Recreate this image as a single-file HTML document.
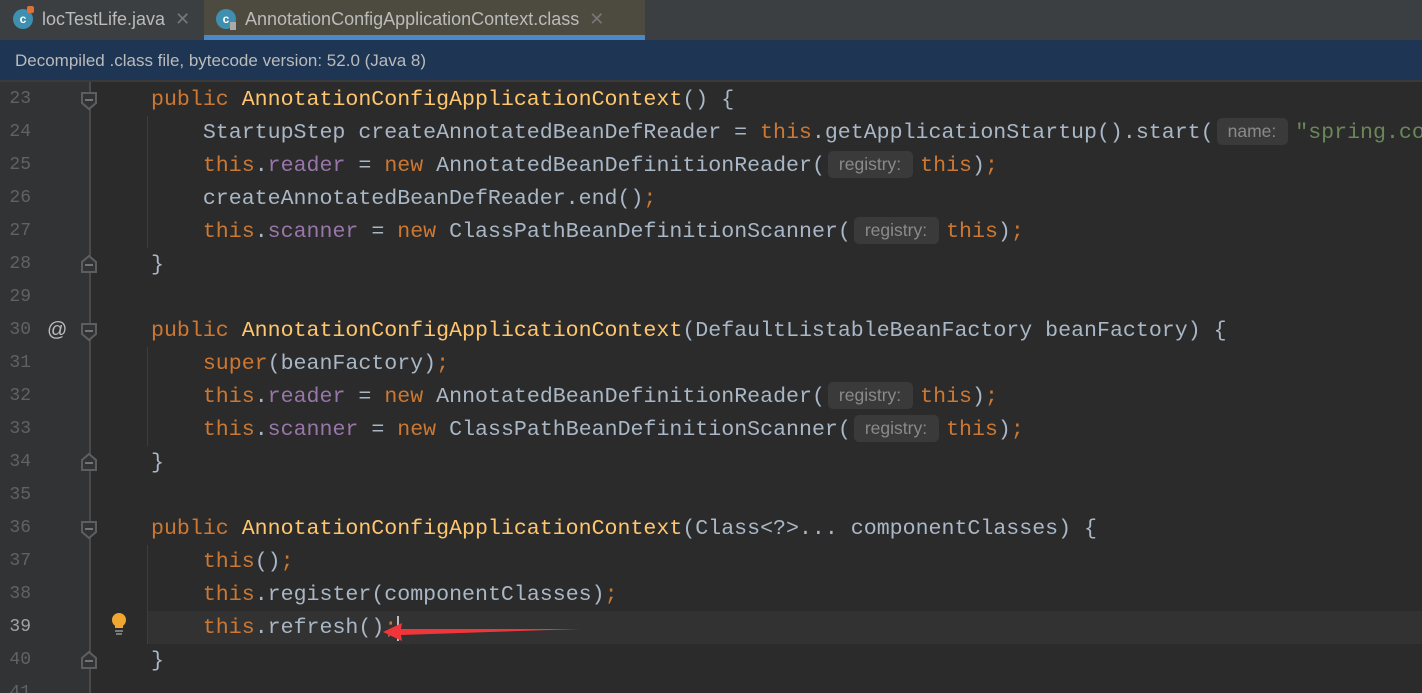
<!DOCTYPE html>
<html style="overflow:hidden;width:1422px;height:693px"><head><meta charset="utf-8"><style>
body{margin:0;width:1422px;height:693px;overflow:hidden;background:#2b2b2b;font-family:"Liberation Sans",sans-serif;position:relative}
.tabs{position:absolute;left:0;top:0;width:1422px;height:40px;background:#3c3f41}
.tab{position:absolute;top:0;height:35px;color:#bbbbbb;font-size:18px;line-height:38px}
.ic{position:absolute;top:9px;width:20px;height:20px;border-radius:50%;background:#3f8fb0;color:#fff;font-size:12px;line-height:20px;text-align:center;font-weight:bold}
.x{color:#777;margin-left:10px}
.banner{position:absolute;left:0;top:40px;width:1422px;height:40px;background:#1e3553;color:#bbbbbb;font-size:17px;line-height:41px;padding-left:15px;box-sizing:border-box}
.sep{position:absolute;left:0;top:80px;width:1422px;height:2px;background:#3a3a3a}
.gutter{position:absolute;left:0;top:82px;width:89px;height:611px;background:#313335}
.vline{position:absolute;left:89px;top:82px;width:2px;height:611px;background:#4a4a4a}
.ln{position:absolute;left:0;width:31px;text-align:right;color:#606366;font-family:"Liberation Mono",monospace;font-size:18px;line-height:33px}
.code{position:absolute;left:151px;right:0;overflow:hidden;white-space:pre;font-family:"Liberation Mono",monospace;font-size:21.6px;line-height:33px;color:#a9b7c6}
.k{color:#cc7832}.m{color:#ffc66d}.f{color:#9876aa}.s{color:#6a8759}
.h{display:inline-block;font-family:"Liberation Sans",sans-serif;font-size:17.5px;color:#8a8a8a;background:#3a3a3a;border-radius:5px;padding:0 12px 0 11px;line-height:27px;vertical-align:1px;margin:0 7px 0 3px}
.guide{position:absolute;left:147px;width:1px;background:#3d3d3d}
</style></head><body>
<div class="tabs">
 <div class="tab" style="left:0;width:204px;">
  <div class="ic" style="left:13px">c</div><div style="position:absolute;left:27px;top:6px;width:7px;height:7px;background:#e0703a;border-radius:2px"></div>
  <span style="position:absolute;left:42px;white-space:nowrap">locTestLife.java<span class="x">✕</span></span></div>
 <div class="tab" style="left:204px;width:441px;background:#4d4a3f;height:35px">
  <div class="ic" style="left:12px">c</div><div style="position:absolute;left:26px;top:22px;width:6px;height:8px;background:#aaa"></div>
  <span style="position:absolute;left:41px;white-space:nowrap">AnnotationConfigApplicationContext.class<span class="x">✕</span></span></div>
 <div style="position:absolute;left:204px;top:35px;width:441px;height:5px;background:#4a88c7"></div>
</div>
<div class="banner">Decompiled .class file, bytecode version: 52.0 (Java 8)</div>
<div class="sep"></div>
<div class="gutter"></div>
<div class="vline"></div>
<div style="position:absolute;left:147px;top:611px;width:1275px;height:33px;background:#323232"></div>
<div class="guide" style="top:116px;height:132px"></div>
<div class="guide" style="top:347px;height:99px"></div>
<div class="guide" style="top:545px;height:99px"></div>

<div class="ln" style="top:83px">23</div><div class="ln" style="top:116px">24</div><div class="ln" style="top:149px">25</div><div class="ln" style="top:182px">26</div><div class="ln" style="top:215px">27</div><div class="ln" style="top:248px">28</div><div class="ln" style="top:281px">29</div><div class="ln" style="top:314px">30</div><div class="ln" style="top:347px">31</div><div class="ln" style="top:380px">32</div><div class="ln" style="top:413px">33</div><div class="ln" style="top:446px">34</div><div class="ln" style="top:479px">35</div><div class="ln" style="top:512px">36</div><div class="ln" style="top:545px">37</div><div class="ln" style="top:578px">38</div><div class="ln" style="top:611px;color:#a4a3a3">39</div><div class="ln" style="top:644px">40</div><div class="ln" style="top:677px;height:16px;overflow:hidden">41</div>
<div style="position:absolute;left:47px;top:314px;color:#bbb;font-size:20px;line-height:33px">@</div>

<svg style="position:absolute;left:0;top:0" width="140" height="693">
 <g fill="#313335" stroke="#5e5e5e" stroke-width="2">
  <path d="M82 93h14v10l-7 6l-7-6z"/><path d="M82 324h14v10l-7 6l-7-6z"/><path d="M82 522h14v10l-7 6l-7-6z"/>
  <path d="M82 272h14v-10l-7-6l-7 6z"/><path d="M82 470h14v-10l-7-6l-7 6z"/><path d="M82 668h14v-10l-7-6l-7 6z"/>
 </g>
 <g stroke="#8a8a8a" stroke-width="1.5"><path d="M85 100h8M85 331h8M85 529h8M85 265h8M85 463h8M85 661h8"/></g>
 <circle cx="119" cy="620" r="7" fill="#f0a732"/><rect x="115" y="625" width="8" height="3" fill="#f0a732"/><path d="M115 631h8M116 634h6" stroke="#aaa" stroke-width="1.3"/>
</svg>

<div class="code" style="top:84px"><span class="k">public </span><span class="m">AnnotationConfigApplicationContext</span>() {</div>
<div class="code" style="top:117px">    StartupStep createAnnotatedBeanDefReader = <span class="k">this</span>.getApplicationStartup().start(<span class="h">name:</span><span class="s">"spring.context.annotated-bean-reader.create"</span>);</div>
<div class="code" style="top:150px">    <span class="k">this</span>.<span class="f">reader</span> = <span class="k">new </span>AnnotatedBeanDefinitionReader(<span class="h">registry:</span><span class="k">this</span>)<span class="k">;</span></div>
<div class="code" style="top:183px">    createAnnotatedBeanDefReader.end()<span class="k">;</span></div>
<div class="code" style="top:216px">    <span class="k">this</span>.<span class="f">scanner</span> = <span class="k">new </span>ClassPathBeanDefinitionScanner(<span class="h">registry:</span><span class="k">this</span>)<span class="k">;</span></div>
<div class="code" style="top:249px">}</div>
<div class="code" style="top:315px"><span class="k">public </span><span class="m">AnnotationConfigApplicationContext</span>(DefaultListableBeanFactory beanFactory) {</div>
<div class="code" style="top:348px">    <span class="k">super</span>(beanFactory)<span class="k">;</span></div>
<div class="code" style="top:381px">    <span class="k">this</span>.<span class="f">reader</span> = <span class="k">new </span>AnnotatedBeanDefinitionReader(<span class="h">registry:</span><span class="k">this</span>)<span class="k">;</span></div>
<div class="code" style="top:414px">    <span class="k">this</span>.<span class="f">scanner</span> = <span class="k">new </span>ClassPathBeanDefinitionScanner(<span class="h">registry:</span><span class="k">this</span>)<span class="k">;</span></div>
<div class="code" style="top:447px">}</div>
<div class="code" style="top:513px"><span class="k">public </span><span class="m">AnnotationConfigApplicationContext</span>(Class&lt;?&gt;... componentClasses) {</div>
<div class="code" style="top:546px">    <span class="k">this</span>()<span class="k">;</span></div>
<div class="code" style="top:579px">    <span class="k">this</span>.register(componentClasses)<span class="k">;</span></div>
<div class="code" style="top:612px">    <span class="k">this</span>.refresh()<span class="k">;</span></div>
<div class="code" style="top:645px">}</div>
<div style="position:absolute;left:397px;top:616px;width:2px;height:25px;background:#bbb"></div>
<svg style="position:absolute;left:0;top:0" width="1422" height="693"><path d="M383 632L402 623L401 629L580 629L401 635L402 641Z" fill="#f0363a"/></svg>
</body></html>
